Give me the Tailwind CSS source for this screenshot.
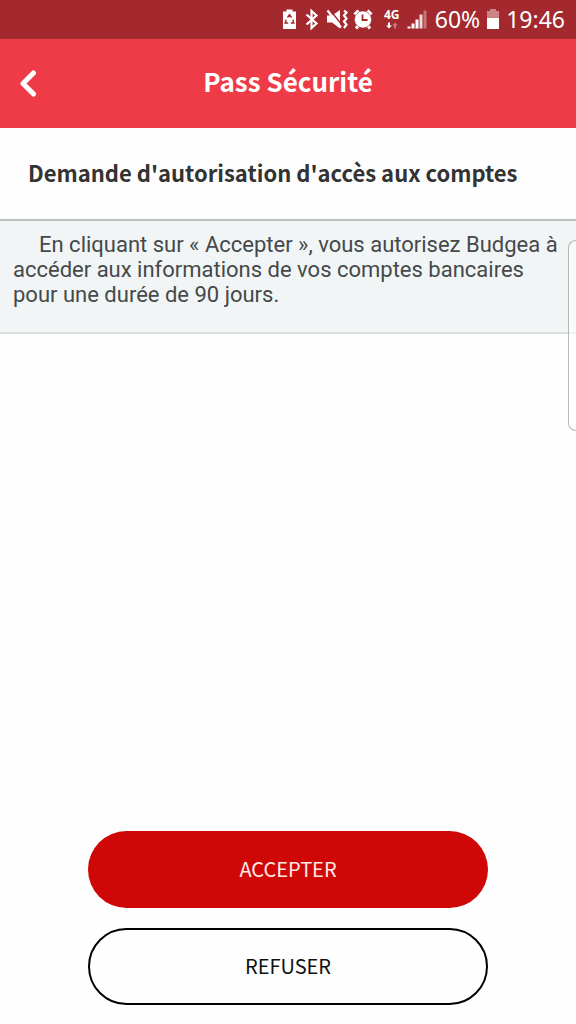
<!DOCTYPE html>
<html lang="fr">
<head>
<meta charset="utf-8">
<meta name="viewport" content="width=device-width, initial-scale=1">
<title>Pass Sécurité</title>
<script src="https://cdn.jsdelivr.net/npm/@tailwindcss/browser@4"></script>
</head>
<body class="relative flex min-h-screen flex-col bg-[#fefefe] font-['Noto_Sans_CJK_SC',sans-serif] text-[#333]">
<div class="flex h-[39px] items-center justify-end bg-[#a3292f] pr-[11px] pb-px text-white">
  <svg class="h-8 w-[156px] shrink-0" viewBox="276 3 156 32" fill="none" aria-hidden="true">
    <path d="M283 11.500h3.500V9.500h6v2h3.500V29h-13z" fill="#fff"/>
    <path d="m287.500 17.500 2-2.800 2 2.800m1.300 2.300 1 3.200h-3m-2.600 0h-3l1-3.200" stroke="#a3292f" stroke-width="1.500"/>
    <path d="m306.500 14.500 10 9-5 4.500V11l5 4.500-10 9" stroke="#fff" stroke-width="2.200"/>
    <path d="M327 15.500h5l8-5.500v18.500l-8-6h-5z" fill="#fff"/>
    <path d="m329.500 9.500 13 16" stroke="#a3292f" stroke-width="1.500"/>
    <path d="m327.500 10.500 13.500 17" stroke="#fff" stroke-width="2.200"/>
    <path d="m344 10.500 2.500 2-2.500 3 2.500 3-2.500 3 2.500 3-2.500 3.500" stroke="#fff" stroke-width="2.200"/>
    <path d="m354.500 14.500 4-4m13 4-4-4M358 26l-2 2.500m12-2.500 2 2.500" stroke="#fff" stroke-width="3"/>
    <circle cx="363" cy="19.500" r="8.500" fill="#fff" stroke="#a3292f" stroke-width=".5"/>
    <path d="M362.500 14.500v5.500h5" stroke="#a3292f" stroke-width="1.800"/>
    <text x="384" y="19" fill="#fff" font-family="Noto Sans, sans-serif" font-size="12" font-weight="700">4G</text>
    <path d="M388 22.500h2v3h2l-3 3-3-3h2z" fill="#fff"/>
    <path d="M394 28.500h2v-3h2l-3-3-3 3h2z" fill="#c97679"/>
    <path d="M407.500 26.500h3v2h-3zM411.500 23.500h3v5h-3zM415.500 19.500h3v9h-3z" fill="#fff"/>
    <path d="M419.500 14.500h3v14h-3z" fill="#f0dada"/>
    <path d="M423.500 10.500h3v18h-3z" fill="#c97679"/>
  </svg>
  <span class="ml-[3px] font-['Noto_Sans',sans-serif] text-[23px] leading-6">60%</span>
  <svg class="ml-1.5 h-6 w-[14px] shrink-0" viewBox="486 7 14 24" aria-hidden="true"><path d="M487 11h3V9h6v2h3v8h-12z" fill="#ce8487"/><path d="M487 18h12v11h-12z" fill="#fff"/></svg>
  <span class="ml-1.5 font-['Noto_Sans',sans-serif] text-[23px] leading-6">19:46</span>
</div>
<header class="grid h-[89px] grid-cols-[56px_1fr_56px] items-center bg-[#ef3b47] pb-1.5 text-white">
  <button type="button" aria-label="Retour" class="flex h-14 w-14 items-center justify-center">
    <svg class="h-8 w-8" viewBox="0 0 32 32" fill="none" aria-hidden="true"><path d="M21.500 8 11 18.500 21.500 29" stroke="#fff" stroke-width="5" stroke-linecap="round" stroke-linejoin="round"/></svg>
  </button>
  <h1 class="text-center text-[26px] leading-8 font-bold">Pass Sécurité</h1>
</header>
<main class="flex flex-1 flex-col">
  <h2 class="px-7 pt-7 pb-[31px] text-[22px] leading-8 font-bold">Demande d'autorisation d'accès aux comptes</h2>
  <p class="border-t-2 border-b-2 border-t-[#bcbebf] border-b-[#dcdfe0] bg-[#f1f5f6] px-[13px] pt-[11px] pb-[25px] indent-[26px] font-[Roboto,sans-serif] text-[22px] leading-[25px] text-[#45494a]">En cliquant sur « Accepter », vous autorisez Budgea à accéder aux informations de vos comptes bancaires pour une durée de 90 jours.</p>
  <div class="mt-auto flex flex-col gap-5 px-[88px] pb-[19px] text-[20px] leading-8">
    <button type="button" class="h-[77px] rounded-full bg-[#cf0807] pb-0.5 text-[#ffe9e7]">ACCEPTER</button>
    <button type="button" class="h-[77px] rounded-full border-2 border-black pb-0.5 text-[#111]">REFUSER</button>
  </div>
</main>
<div class="absolute top-[240px] right-0 h-[191px] w-2 rounded-l-lg border border-r-0 border-[#b5b7b8] bg-white/60" aria-hidden="true"></div>
</body>
</html>
